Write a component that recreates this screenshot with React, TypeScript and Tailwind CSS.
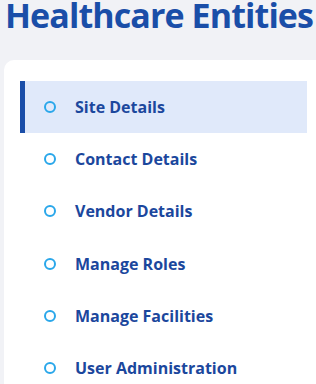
import React from "react";

const items = [
	"Site Details",
	"Contact Details",
	"Vendor Details",
	"Manage Roles",
	"Manage Facilities",
	"User Administration",
];

export default function App() {
	return (
		<div
			className="h-[384px] w-[316px] overflow-hidden bg-[#f1f2f6]"
			style={{ fontFamily: '"Open Sans", "Noto Sans", sans-serif' }}
		>
			{/* Page title */}
			<h1 className="-mt-[3px] pl-[5px] text-[34px] font-bold leading-[36px] tracking-[-0.9px] text-[#1a4ea8] whitespace-nowrap">
				Healthcare Entities
			</h1>

			{/* Menu card */}
			<div className="ml-[4px] mt-[27px] h-[400px] w-[330px] rounded-tl-[10px] bg-white pt-[21px] pl-[16px]">
				<ul className="w-[287px]">
					{items.map((label, i) => (
						<li
							key={label}
							className={`flex h-[52.2px] items-center ${
								i === 0 ? "border-l-[5px] border-[#1a4ea8] bg-[#e0e9fa] pl-[19px]" : "pl-[24px]"
							}`}
						>
							<span className="h-[12px] w-[12px] shrink-0 rounded-full border-2 border-[#2aa7ea]" />
							<span className="ml-[19px] text-[16px] font-bold text-[#1b479d]">{label}</span>
						</li>
					))}
				</ul>
			</div>
		</div>
	);
}
